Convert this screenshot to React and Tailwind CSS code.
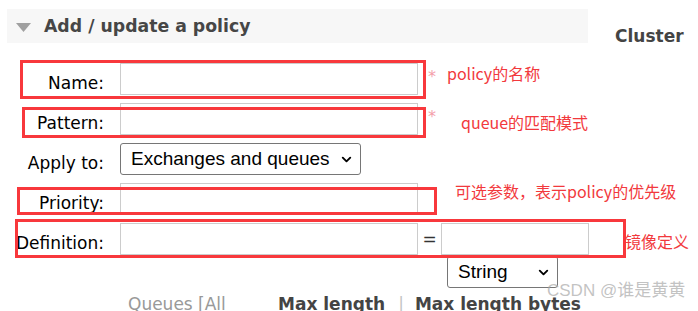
import { ChevronDown } from "lucide-react";

const labelCls =
  "w-[104px] mr-[16px] pb-[3px] text-right text-[17px] leading-none text-black shrink-0";
const inputCls =
  "h-[32px] border border-[#cccccc] bg-white outline-none shrink-0";

const Field = ({ label, children }) => (
  <div className="flex items-end h-[32px] mb-[8px]">
    <span className={labelCls}>{label}</span>
    {children}
  </div>
);

const Select = ({ width, options }) => (
  <div className={`relative h-[32px] shrink-0 ${width}`}>
    <select
      defaultValue={options[0]}
      className="appearance-none w-full h-full border border-[#767676] rounded-[3px] bg-white pl-[10px] text-[19px] text-black font-['Liberation_Sans',Arial,sans-serif] outline-none"
    >
      {options.map((o) => (
        <option key={o}>{o}</option>
      ))}
    </select>
    <ChevronDown
      size={15}
      strokeWidth={3}
      className="absolute right-[7px] top-[9px] text-black pointer-events-none"
    />
  </div>
);

// annotations drawn over the screenshot
const boxes = [
  "left-[20px] top-[60px] w-[406px] h-[39px]",
  "left-[22px] top-[107px] w-[404px] h-[31px]",
  "left-[17px] top-[187px] w-[420px] h-[28px]",
  "left-[15px] top-[219px] w-[611px] h-[39px]",
];

const notes = [
  { text: "policy的名称", pos: "left-[447px] top-[65px]" },
  { text: "queue的匹配模式", pos: "left-[461px] top-[114px]" },
  { text: "可选参数，表示policy的优先级", pos: "left-[455px] top-[183px]" },
  { text: "镜像定义", pos: "left-[625px] top-[233px]" },
];

const App = () => {
  return (
    <div className="relative w-[698px] h-[311px] overflow-hidden bg-white font-['DejaVu_Sans',Verdana,sans-serif]">
      {/* Header */}
      <div className="flex h-[34px] mt-[9px]">
        <div className="ml-[7px] w-[581px] h-[34px] bg-[#f7f7f7] flex items-center pt-[2px]">
          <svg width="15" height="9" viewBox="0 0 15 9" className="ml-[9px] shrink-0">
            <path d="M0 0 H15 L7.5 9 Z" fill="#a0a0a0" />
          </svg>
          <h2 className="ml-[13px] text-[17.3px] font-bold leading-none text-[#464646]">
            Add / update a policy
          </h2>
        </div>
        <span className="ml-[27px] mt-[19px] text-[17px] font-bold leading-none text-[#444444]">
          Cluster
        </span>
      </div>

      {/* Form */}
      <div className="mt-[20px]">
        <Field label="Name:">
          <input className={`${inputCls} w-[298px]`} />
          <span className="self-start ml-[10px] mt-[6px] text-[16px] leading-none text-[#f4a0aa]">
            *
          </span>
        </Field>
        <Field label="Pattern:">
          <input className={`${inputCls} w-[298px]`} />
          <span className="self-start ml-[10px] mt-[6px] text-[16px] leading-none text-[#f4a0aa]">
            *
          </span>
        </Field>
        <Field label="Apply to:">
          <Select
            width="w-[241px]"
            options={["Exchanges and queues", "Exchanges", "Queues"]}
          />
        </Field>
        <Field label="Priority:">
          <input className={`${inputCls} w-[298px]`} />
        </Field>
        <div className="flex items-end h-[32px]">
          <span className={labelCls}>Definition:</span>
          <input className={`${inputCls} w-[298px]`} />
          <span className="self-center w-[23px] text-center text-[17px] leading-none text-[#333]">
            =
          </span>
          <input className={`${inputCls} w-[148px]`} />
        </div>
        <div className="ml-[447px] mt-[1px]">
          <Select width="w-[111px]" options={["String", "Number", "Boolean", "List"]} />
        </div>
        <div className="flex items-start mt-[8px] ml-[128px] text-[17px] leading-none whitespace-nowrap">
          <span className="w-[150px] text-[#999999]">Queues [All</span>
          <span className="font-bold text-[#444444]">Max length</span>
          <span className="ml-[13px] text-[#c4c4c4]">|</span>
          <span className="ml-[11px] font-bold text-[#444444]">Max length bytes</span>
        </div>
      </div>

      {boxes.map((b) => (
        <div
          key={b}
          className={`absolute ${b} border-[3px] border-[#f8383c] pointer-events-none`}
        />
      ))}
      {notes.map((n) => (
        <span
          key={n.text}
          className={`absolute ${n.pos} text-[16px] leading-none whitespace-nowrap text-[#f2393d] font-['Noto_Sans_CJK_SC',sans-serif]`}
        >
          {n.text}
        </span>
      ))}

      {/* watermark */}
      <span className="absolute left-[547px] top-[282px] text-[17px] leading-none whitespace-nowrap text-[#a8a8a8]/70 font-['Liberation_Sans','Noto_Sans_CJK_SC',sans-serif]">
        CSDN @谁是黄黄
      </span>
    </div>
  );
};

export default App;
